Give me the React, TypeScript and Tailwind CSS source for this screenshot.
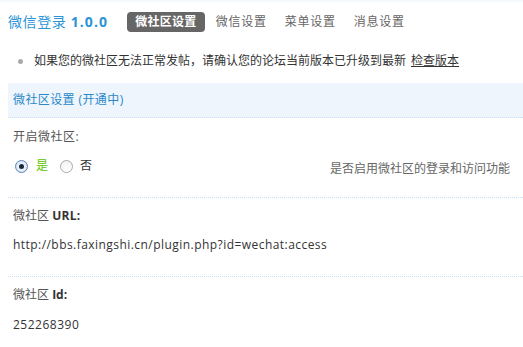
import React from "react";

const tabs = ["微信设置", "菜单设置", "消息设置"];

const Radio = ({ checked }: { checked?: boolean }) => (
  <span
    className={
      "inline-flex h-[13px] w-[13px] items-center justify-center rounded-full border " +
      (checked
        ? "border-[#5b84b8] bg-[radial-gradient(circle,#ffffff_0%,#c9dcf3_100%)]"
        : "border-[#a9a9a9] bg-[linear-gradient(#f2f2f2,#ffffff)]")
    }
  >
    {checked && <span className="h-[5px] w-[5px] rounded-full bg-[#1b2a3a]" />}
  </span>
);

const Divider = () => <div className="border-t border-dotted border-[#c8def2]" />;

export default function App() {
  return (
    <div className="min-h-[347px] w-full overflow-hidden bg-white pl-2 text-[12px] text-[#333] [font-family:'Open_Sans','Noto_Sans_CJK_SC',sans-serif]">
      {/* top strip */}
      <div className="-ml-2 h-[3px] bg-[linear-gradient(#f1f5f9,#ffffff)]" />

      {/* title + tabs */}
      <div className="flex h-[37px] items-center">
        <h1 className="text-[14px] leading-5 tracking-[0.6px] text-[#2b94d6]">
          微信登录 <span className="font-bold tracking-[1.1px]">1.0.0</span>
        </h1>
        <span className="ml-[19px] rounded-[4px] bg-[#666] px-[8px] py-[1px] text-[12px] font-bold leading-[18px] tracking-[0.3px] text-white">
          微社区设置
        </span>
        <div className="ml-[11px] flex gap-[18px] text-[#666]">
          {tabs.map((t) => (
            <span key={t} className="tracking-[0.75px]">
              {t}
            </span>
          ))}
        </div>
      </div>

      {/* notice */}
      <div className="mt-[11px] flex h-5 items-center pl-[10px] leading-5">
        <span className="h-[5px] w-[5px] rounded-full bg-[#aaa]" />
        <span className="ml-[11px]">
          如果您的微社区无法正常发帖，请确认您的论坛当前版本已升级到最新
        </span>
        <a className="ml-[5px] underline">检查版本</a>
      </div>

      {/* section header */}
      <div className="mt-3 flex h-[35px] items-center border-b border-dotted border-[#c8def2] bg-[#eef5fc] pl-[5px] tracking-[0.4px] text-[#2a88c9]">
        微社区设置 (开通中)
      </div>

      {/* enable row */}
      <div className="pb-[21px] pl-[5px]">
        <div className="mt-[9px] leading-5 tracking-[0.5px] text-[#555]">开启微社区:</div>
        <div className="mt-[9px] flex h-5 items-center">
          <label className="flex items-center gap-[8px] pl-[2px]">
            <Radio checked />
            <span className="text-[#5cc400]">是</span>
          </label>
          <label className="ml-[12px] flex items-center gap-[7px]">
            <Radio />
            <span>否</span>
          </label>
          <span className="relative top-[3px] ml-auto pr-[13px] text-[#666]">是否启用微社区的登录和访问功能</span>
        </div>
      </div>
      <Divider />

      {/* url */}
      <div className="pb-[21px] pl-[5px]">
        <div className="pt-[8px] leading-5 text-[#555]">
          微社区 <span className="font-bold tracking-[0.3px] text-[#333]">URL:</span>
        </div>
        <div className="mt-[9px] leading-5 tracking-[0.45px]">http://bbs.faxingshi.cn/plugin.php?id=wechat:access</div>
      </div>
      <Divider />

      {/* id */}
      <div className="pl-[5px]">
        <div className="pt-[8px] leading-5 text-[#555]">
          微社区 <span className="font-bold text-[#333]">Id:</span>
        </div>
        <div className="mt-[10px] leading-5 tracking-[0.5px]">252268390</div>
      </div>
    </div>
  );
}
